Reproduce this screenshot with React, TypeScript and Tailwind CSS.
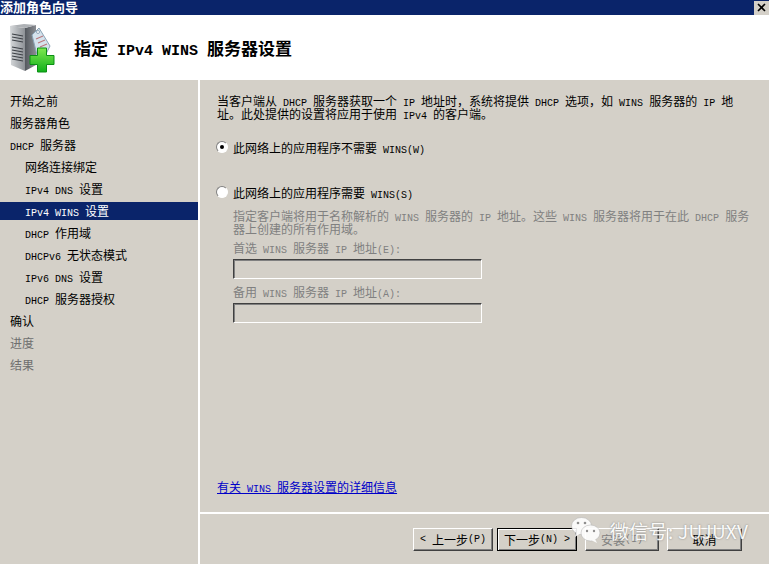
function Mixed({ text, latin = "text-[10px]" }: { text: string; latin?: string }) {
  // SimSun has half width latin glyphs, so latin runs get a smaller mono size
  const parts = text.split(/([\x20-\x7e]+)/)
  return (
    <>
      {parts.map((part, i) =>
        /^[\x20-\x7e]+$/.test(part) ? (
          <span key={i} className={`${latin} leading-[0] font-['Liberation_Mono',monospace] whitespace-pre`}>
            {part}
          </span>
        ) : (
          <span key={i}>{part}</span>
        )
      )}
    </>
  )
}

const steps = [
  { label: "开始之前", level: 0 },
  { label: "服务器角色", level: 0 },
  { label: "DHCP 服务器", level: 0 },
  { label: "网络连接绑定", level: 1 },
  { label: "IPv4 DNS 设置", level: 1 },
  { label: "IPv4 WINS 设置", level: 1, active: true },
  { label: "DHCP 作用域", level: 1 },
  { label: "DHCPv6 无状态模式", level: 1 },
  { label: "IPv6 DNS 设置", level: 1 },
  { label: "DHCP 服务器授权", level: 1 },
  { label: "确认", level: 0 },
  { label: "进度", level: 0, muted: true },
  { label: "结果", level: 0, muted: true },
]

function ServerIcon() {
  return (
    <svg width="50" height="52" viewBox="0 0 50 52" className="shrink-0">
      <defs>
        <linearGradient id="front" x1="0" y1="0" x2="1" y2="0">
          <stop offset="0" stopColor="#d5d8da" />
          <stop offset="1" stopColor="#8d9196" />
        </linearGradient>
        <linearGradient id="side" x1="0" y1="0" x2="1" y2="0">
          <stop offset="0" stopColor="#54585e" />
          <stop offset="1" stopColor="#8a8d92" />
        </linearGradient>
        <linearGradient id="plus" x1="0" y1="0" x2="0" y2="1">
          <stop offset="0" stopColor="#7fe84f" />
          <stop offset="1" stopColor="#10b01a" />
        </linearGradient>
      </defs>
      <path d="M3 4 L18 6 L18 49 L4 43 Z" fill="url(#front)" />
      <path d="M18 6 L29 3 L29 43 L18 49 Z" fill="url(#side)" />
      <path d="M3 4 L17 2 L29 3 L18 6 Z" fill="#aeb1b5" />
      <path d="M5 12 L16 14 M5 15 L16 17 M5 18 L16 20 M5 25 L16 27 M5 28 L16 30 M5 31 L16 33 M5 34 L16 36 M5 37 L16 39" stroke="#3c4046" strokeWidth="1.2" />
      <path d="M25 13 L32 6 L43 24 L37 36 L30 33 Z" fill="#d5e2ec" stroke="#8aa3b6" strokeWidth="1" />
      <circle cx="31" cy="10" r="1.5" fill="#fff" stroke="#6f8aa0" strokeWidth="0.7" />
      <path d="M29 17 L36 14 M31 21 L38 18 M33 25 L40 22" stroke="#b9777c" strokeWidth="1.1" />
      <path
        d="M30.5 26 H39.5 V33.5 H47 V42.5 H39.5 V50 H30.5 V42.5 H23 V33.5 H30.5 Z"
        fill="url(#plus)"
        stroke="#0b8f14"
        strokeWidth="1"
      />
    </svg>
  )
}

function Radio({ checked }: { checked?: boolean }) {
  return (
    <span className="-ml-px w-3 h-3 rounded-full bg-white border border-[#808080] border-r-white border-b-white flex items-center justify-center shrink-0">
      {checked && <span className="w-1 h-1 rounded-full bg-black" />}
    </span>
  )
}

function Btn({ label, width, primary, disabled }: { label: string; width: string; primary?: boolean; disabled?: boolean }) {
  return (
    <div
      className={`${width} h-[23px] flex items-center justify-center border ${
        primary
          ? "border-black shadow-[inset_1px_1px_0_#fff,inset_-1px_-1px_0_#808080]"
          : "border-white border-r-[#404040] border-b-[#404040] shadow-[inset_-1px_-1px_0_#808080]"
      } ${disabled ? "text-[#808080]" : "text-black"}`}
    >
      <Mixed text={label} />
    </div>
  )
}

function Field() {
  return (
    <div className="w-[249px] h-5 mt-[5px] border border-t-[#404040] border-l-[#404040] border-r-white border-b-white shadow-[inset_1px_1px_0_#808080]" />
  )
}

export default function App() {
  return (
    <div className="relative w-[769px] h-[564px] overflow-hidden flex flex-col bg-[#d4d0c8] text-black text-[12px] font-['Noto_Sans_CJK_SC',sans-serif]">
      <div className="h-[15px] bg-[#0a246a] flex items-center justify-between shrink-0 overflow-hidden">
        <span className="text-white text-[13px] font-bold leading-[13px] -mt-[3px]">添加角色向导</span>
        <div className="w-[15px] h-[14px] bg-[#d4d0c8] flex items-center justify-center">
          <svg width="9" height="9" viewBox="0 0 9 9">
            <path d="M1 1 L8 8 M8 1 L1 8" stroke="#000" strokeWidth="1.6" />
          </svg>
        </div>
      </div>

      <div className="h-[65px] bg-white flex items-center pl-[7px] shrink-0">
        <ServerIcon />
        <h1 className="ml-[17px] text-[17px] font-bold leading-none">
          <Mixed text="指定 IPv4 WINS 服务器设置" latin="text-[15px] font-bold" />
        </h1>
      </div>

      <div className="flex-1 flex min-h-0">
        <aside className="w-[198px] shrink-0 pt-3 flex flex-col gap-1">
          {steps.map((s) => (
            <div
              key={s.label}
              className={`h-[18px] leading-[18px] ${s.level ? "pl-[25px]" : "pl-[10px]"} ${
                s.active ? "bg-[#0a246a] text-white" : s.muted ? "text-[#6f6f6f]" : ""
              }`}
            >
              <Mixed text={s.label} />
            </div>
          ))}
        </aside>

        <main className="flex-1 border-l-2 border-white flex flex-col min-w-0">
          <div className="flex-1 pl-[17px] pt-[14px] pb-[19px] flex flex-col leading-[13px]">
            <p>
              <span className="block whitespace-nowrap">
                <Mixed text={"当客户端从 DHCP 服务器获取一个 IP 地址时\uFF0C系统将提供 DHCP 选项\uFF0C如 WINS 服务器的 IP 地"} />
              </span>
              <span className="block whitespace-nowrap">
                <Mixed text="址。此处提供的设置将应用于使用 IPv4 的客户端。" />
              </span>
            </p>

            <div className="mt-[18px] h-[18px] flex items-center gap-[5px]">
              <Radio checked />
              <span>
                <Mixed text="此网络上的应用程序不需要 WINS(W)" />
              </span>
            </div>
            <div className="mt-[27px] h-[18px] flex items-center gap-[5px]">
              <Radio />
              <span>
                <Mixed text="此网络上的应用程序需要 WINS(S)" />
              </span>
            </div>

            <div className="ml-4 mt-2 text-[#808080]">
              <p>
                <span className="block whitespace-nowrap">
                  <Mixed text="指定客户端将用于名称解析的 WINS 服务器的 IP 地址。这些 WINS 服务器将用于在此 DHCP 服务" />
                </span>
                <span className="block whitespace-nowrap">
                  <Mixed text="器上创建的所有作用域。" />
                </span>
              </p>
              <p className="mt-[6px]">
                <Mixed text="首选 WINS 服务器 IP 地址(E):" />
              </p>
              <Field />
              <p className="mt-[6px]">
                <Mixed text="备用 WINS 服务器 IP 地址(A):" />
              </p>
              <Field />
            </div>

            <a className="mt-auto text-[#0000c8] underline w-fit">
              <Mixed text="有关 WINS 服务器设置的详细信息" />
            </a>
          </div>

          <div className="h-[52px] shrink-0 border-t-2 border-white flex pt-[14px] pl-[213px] gap-2">
            <div className="flex gap-1">
              <Btn label="< 上一步(P)" width="w-[80px]" />
              <Btn label="下一步(N) >" width="w-[80px]" primary />
            </div>
            <Btn label="安装(I)" width="w-[74px]" disabled />
            <Btn label="取消" width="w-[75px]" />
          </div>
        </main>
      </div>

      {/* WeChat watermark sits over the buttons */}
      <div className="absolute left-[571px] top-[516px] flex items-center gap-[9px] opacity-90">
        <svg width="30" height="28" viewBox="0 0 30 28">
          <ellipse cx="10.5" cy="10" rx="10" ry="8.5" fill="#fff" stroke="#aaa" strokeWidth="0.5" />
          <path d="M5 16 L4 21 L10 17 Z" fill="#fff" />
          <ellipse cx="19.5" cy="17" rx="9.5" ry="8" fill="#fff" stroke="#aaa" strokeWidth="0.5" />
          <path d="M24 23 L26 27 L20 24 Z" fill="#fff" />
          <circle cx="7" cy="7" r="1.3" fill="#888" />
          <circle cx="14" cy="7" r="1.3" fill="#888" />
          <circle cx="16" cy="15" r="1.2" fill="#888" />
          <circle cx="23" cy="15" r="1.2" fill="#888" />
        </svg>
        <span className="text-white text-[19px] tracking-[0.3px] leading-none whitespace-nowrap [text-shadow:0_0_2px_#777] font-['Noto_Sans_CJK_SC',sans-serif]">
          微信号: JUJUXV
        </span>
      </div>
    </div>
  )
}
